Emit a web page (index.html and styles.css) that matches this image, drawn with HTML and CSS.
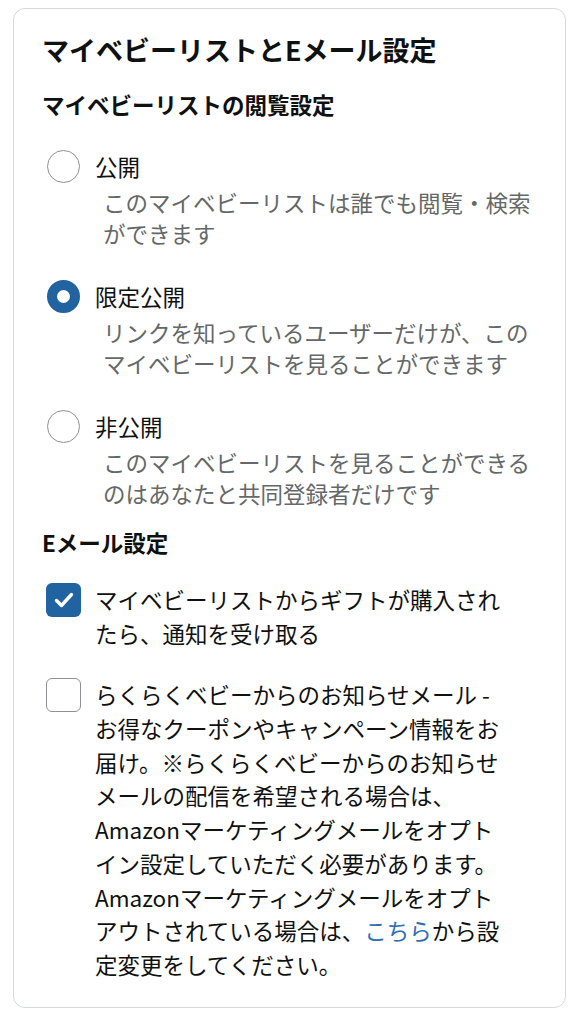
FILE: index.html
```html
<!DOCTYPE html>
<html lang="ja">
<head>
<meta charset="utf-8">
<title>マイベビーリストとEメール設定</title>
<link rel="stylesheet" href="styles.css">
</head>
<body>
<section class="card">
  <h1 class="title">マイベビーリストとEメール設定</h1>
  <h2 class="subtitle">マイベビーリストの閲覧設定</h2>
  <ul class="options">
    <li class="option">
      <span class="radio"></span>
      <div class="option-body">
        <div class="label">公開</div>
        <div class="desc">このマイベビーリストは誰でも閲覧・検索ができます</div>
      </div>
    </li>
    <li class="option">
      <span class="radio radio-on"></span>
      <div class="option-body">
        <div class="label">限定公開</div>
        <div class="desc">リンクを知っているユーザーだけが、このマイベビーリストを見ることができます</div>
      </div>
    </li>
    <li class="option">
      <span class="radio"></span>
      <div class="option-body">
        <div class="label">非公開</div>
        <div class="desc">このマイベビーリストを見ることができるのはあなたと共同登録者だけです</div>
      </div>
    </li>
  </ul>
  <h2 class="subtitle subtitle-email">Eメール設定</h2>
  <ul class="checks">
    <li class="check">
      <span class="box box-on">
        <svg viewBox="0 0 34 34" width="34" height="34"><path d="M9.5 17.5 L14.5 22.5 L24.5 11.5" fill="none" stroke="#fff" stroke-width="3.4" stroke-linecap="round" stroke-linejoin="round"/></svg>
      </span>
      <div class="check-text">マイベビーリストからギフトが購入されたら、通知を受け取る</div>
    </li>
    <li class="check">
      <span class="box"></span>
      <div class="check-text">らくらくベビーからのお知らせメール - お得なクーポンやキャンペーン情報をお届け。※らくらくベビーからのお知らせメールの配信を希望される場合は、Amazonマーケティングメールをオプトイン設定していただく必要があります。Amazonマーケティングメールをオプトアウトされている場合は、<a class="link" href="#">こちら</a>から設定変更をしてください。</div>
    </li>
  </ul>
</section>
</body>
</html>
```

FILE: styles.css
```css
html, body {
  margin: 0;
  padding: 0;
  background: #ffffff;
}

body {
  font-family: "Noto Sans CJK JP", "Noto Sans", sans-serif;
  color: #0f1111;
  font-size: 22.5px;
}

.card {
  box-sizing: border-box;
  width: 553px;
  margin: 8px 0 0 13px;
  border: 1px solid #d5d9d9;
  border-radius: 12px;
  padding: 23px 28px 25px 28px;
}

.title {
  margin: 0;
  font-size: 27px;
  line-height: 36px;
  font-weight: 700;
}

.subtitle {
  margin: 19px 0 0 0;
  font-size: 22.5px;
  line-height: 34px;
  font-weight: 700;
}

.subtitle-email {
  margin-top: 16px;
}

.options,
.checks {
  list-style: none;
  margin: 0;
  padding: 0;
}

.options {
  margin-top: 28px;
  display: flex;
  flex-direction: column;
  gap: 30px;
}

.option {
  display: flex;
  align-items: flex-start;
  padding-left: 5px;
  gap: 15px;
}

.radio {
  flex: none;
  box-sizing: border-box;
  width: 33px;
  height: 33px;
  margin-top: 0.5px;
  border-radius: 50%;
  border: 1.5px solid #8d9092;
  background: #fff;
}

.radio-on {
  border: 10.5px solid #2162a1;
}

.option-body {
  flex: 1;
  display: flex;
  flex-direction: column;
  gap: 4px;
}

.label {
  line-height: 34px;
}

.desc {
  padding-left: 8px;
  line-height: 31px;
  color: #646868;
}

.checks {
  margin-top: 24px;
  display: flex;
  flex-direction: column;
  gap: 27.5px;
}

.check {
  display: flex;
  align-items: flex-start;
  padding-left: 4px;
  gap: 14px;
}

.box {
  flex: none;
  box-sizing: border-box;
  width: 35px;
  height: 34px;
  border-radius: 6px;
  border: 1.5px solid #8d9092;
  background: #fff;
  display: flex;
  align-items: center;
  justify-content: center;
}

.box-on {
  border: none;
  background: #2162a1;
}

.box svg {
  display: block;
}

.check-text {
  width: 412px;
  line-height: 33.75px;
}

.link {
  color: #2f6fb0;
  text-decoration: none;
}
```
